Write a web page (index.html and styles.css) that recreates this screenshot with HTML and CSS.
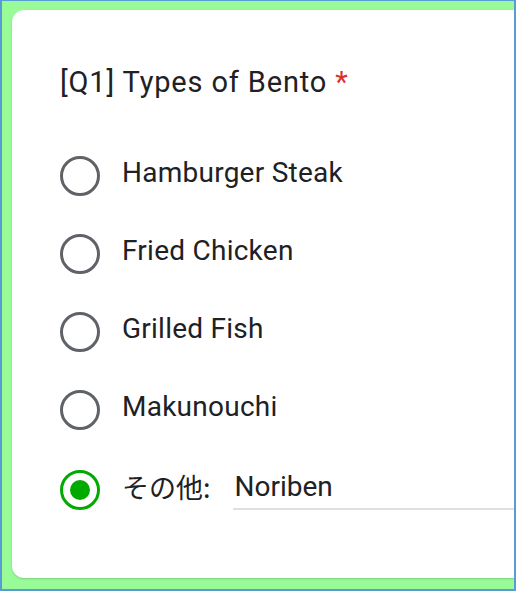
FILE: index.html
```html
<!DOCTYPE html>
<html lang="en">
<head>
<meta charset="utf-8">
<link rel="stylesheet" href="styles.css">
</head>
<body>
<div class="frame">
  <div class="card">
    <div class="title">[Q1] Types of Bento <span class="req">*</span></div>
    <div class="options">
      <div class="opt"><span class="radio"></span><span class="label">Hamburger Steak</span></div>
      <div class="opt"><span class="radio"></span><span class="label">Fried Chicken</span></div>
      <div class="opt"><span class="radio"></span><span class="label">Grilled Fish</span></div>
      <div class="opt"><span class="radio"></span><span class="label">Makunouchi</span></div>
      <div class="opt other"><span class="radio checked"></span><span class="label jp">その他:</span><span class="input">Noriben</span></div>
    </div>
  </div>
</div>
</body>
</html>
```
FILE: styles.css
```css
html, body {
  margin: 0;
  padding: 0;
  background: #ffffff;
}
.frame {
  box-sizing: border-box;
  width: 516px;
  height: 591px;
  border-style: solid;
  border-color: #5b9bd5;
  border-width: 1px 2px 2px 2px;
  background: #98fb98;
  padding: 9px 0 11px 10px;
  display: flex;
  overflow: hidden;
}
.card {
  flex: 1;
  background: #ffffff;
  border-radius: 12px 0 0 12px;
  box-shadow: 0 1px 2px rgba(0,0,0,0.18);
  padding: 57px 0 0 48px;
  font-family: Roboto, "Noto Sans CJK JP", sans-serif;
  color: #202124;
}
.title {
  font-size: 29px;
  line-height: 30px;
  letter-spacing: 0.85px;
}
.req {
  color: #d93025;
}
.options {
  margin-top: 59px;
  display: flex;
  flex-direction: column;
  gap: 38px;
}
.opt {
  display: flex;
  align-items: center;
  height: 40px;
}
.radio {
  box-sizing: border-box;
  width: 40px;
  height: 40px;
  border: 3px solid #5f6368;
  border-radius: 50%;
  flex: none;
  display: flex;
  align-items: center;
  justify-content: center;
}
.radio.checked {
  border-color: #00aa00;
}
.radio.checked::after {
  content: "";
  width: 20px;
  height: 20px;
  border-radius: 50%;
  background: #00aa00;
}
.label {
  margin-left: 22px;
  font-size: 28px;
  line-height: 40px;
  letter-spacing: 0.25px;
  padding-bottom: 6px;
}
.other {
  margin-top: 2px;
  align-items: flex-start;
}
.other .label {
  font-family: "Noto Sans CJK JP", sans-serif;
  font-size: 27px;
  line-height: 34px;
  letter-spacing: 0;
  padding-bottom: 0;
}
.input {
  flex: 1;
  margin-left: 22px;
  font-size: 28px;
  height: 34px;
  line-height: 34px;
  padding: 0 0 4px 2px;
  border-bottom: 2px solid #e0e0e0;
}
```
